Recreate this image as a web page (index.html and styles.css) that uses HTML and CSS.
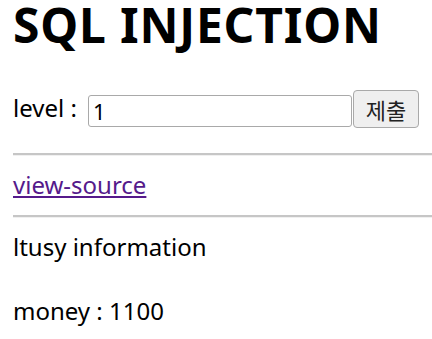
FILE: index.html
```html
<!DOCTYPE html>
<html lang="ko">
<head>
    <meta charset="UTF-8">
    <meta name="viewport" content="width=device-width, initial-scale=1.0">
    <title>SQL INJECTION</title>
    <link rel="stylesheet" href="styles.css">
</head>
<body>
    <h1>SQL INJECTION</h1>
    <form class="level-form" onsubmit="return false;">
        <label for="level">level :</label>
        <input type="text" id="level" name="level" value="1">
        <button type="submit">제출</button>
    </form>
    <hr class="rule-top">
    <p class="source"><a href="#">view-source</a></p>
    <hr class="rule-bottom">
    <p class="info">ltusy information</p>
    <p class="money">money : 1100</p>
</body>
</html>
```
FILE: styles.css
```css
body {
    margin: 0 0 0 13px;
    font-family: "Noto Sans", "Noto Sans CJK KR", sans-serif;
    font-size: 24px;
    line-height: 30px;
    color: #000;
    background: #fff;
}

h1 {
    font-family: "Noto Sans", sans-serif;
    font-size: 48px;
    line-height: 48px;
    font-weight: 700;
    letter-spacing: 0.8px;
    margin: 1px 0 0;
}

.level-form {
    display: flex;
    align-items: flex-end;
    margin-top: 41px;
    height: 38px;
}

.level-form label {
    width: 75px;
    margin-bottom: 5px;
    white-space: nowrap;
}

.level-form input {
    box-sizing: border-box;
    width: 264px;
    height: 32px;
    margin: 0 0 1px 0;
    padding: 0 4px;
    border: 1px solid #a9a9a9;
    border-radius: 3px;
    font-family: "Noto Sans", sans-serif;
    font-size: 22px;
}

.level-form button {
    box-sizing: border-box;
    width: 66px;
    height: 38px;
    margin-left: 1px;
    padding: 0;
    background-color: #efefef;
    border: 1px solid #a9a9a9;
    border-radius: 4px;
    font-family: "Noto Sans CJK KR", sans-serif;
    font-size: 22px;
    color: #222;
}

hr {
    height: 0;
    border: none;
    border-top: 2px solid #c6c6c6;
    border-bottom: 1px solid #f0f0f0;
}

.rule-top {
    margin: 25px 0 0;
}

.rule-bottom {
    margin: 15px 0 0;
}

.source {
    margin: 14px 0 0;
}

.source a {
    color: #551a8b;
}

.info {
    margin: 14px 0 0;
}

.money {
    margin: 34px 0 0;
}
```
